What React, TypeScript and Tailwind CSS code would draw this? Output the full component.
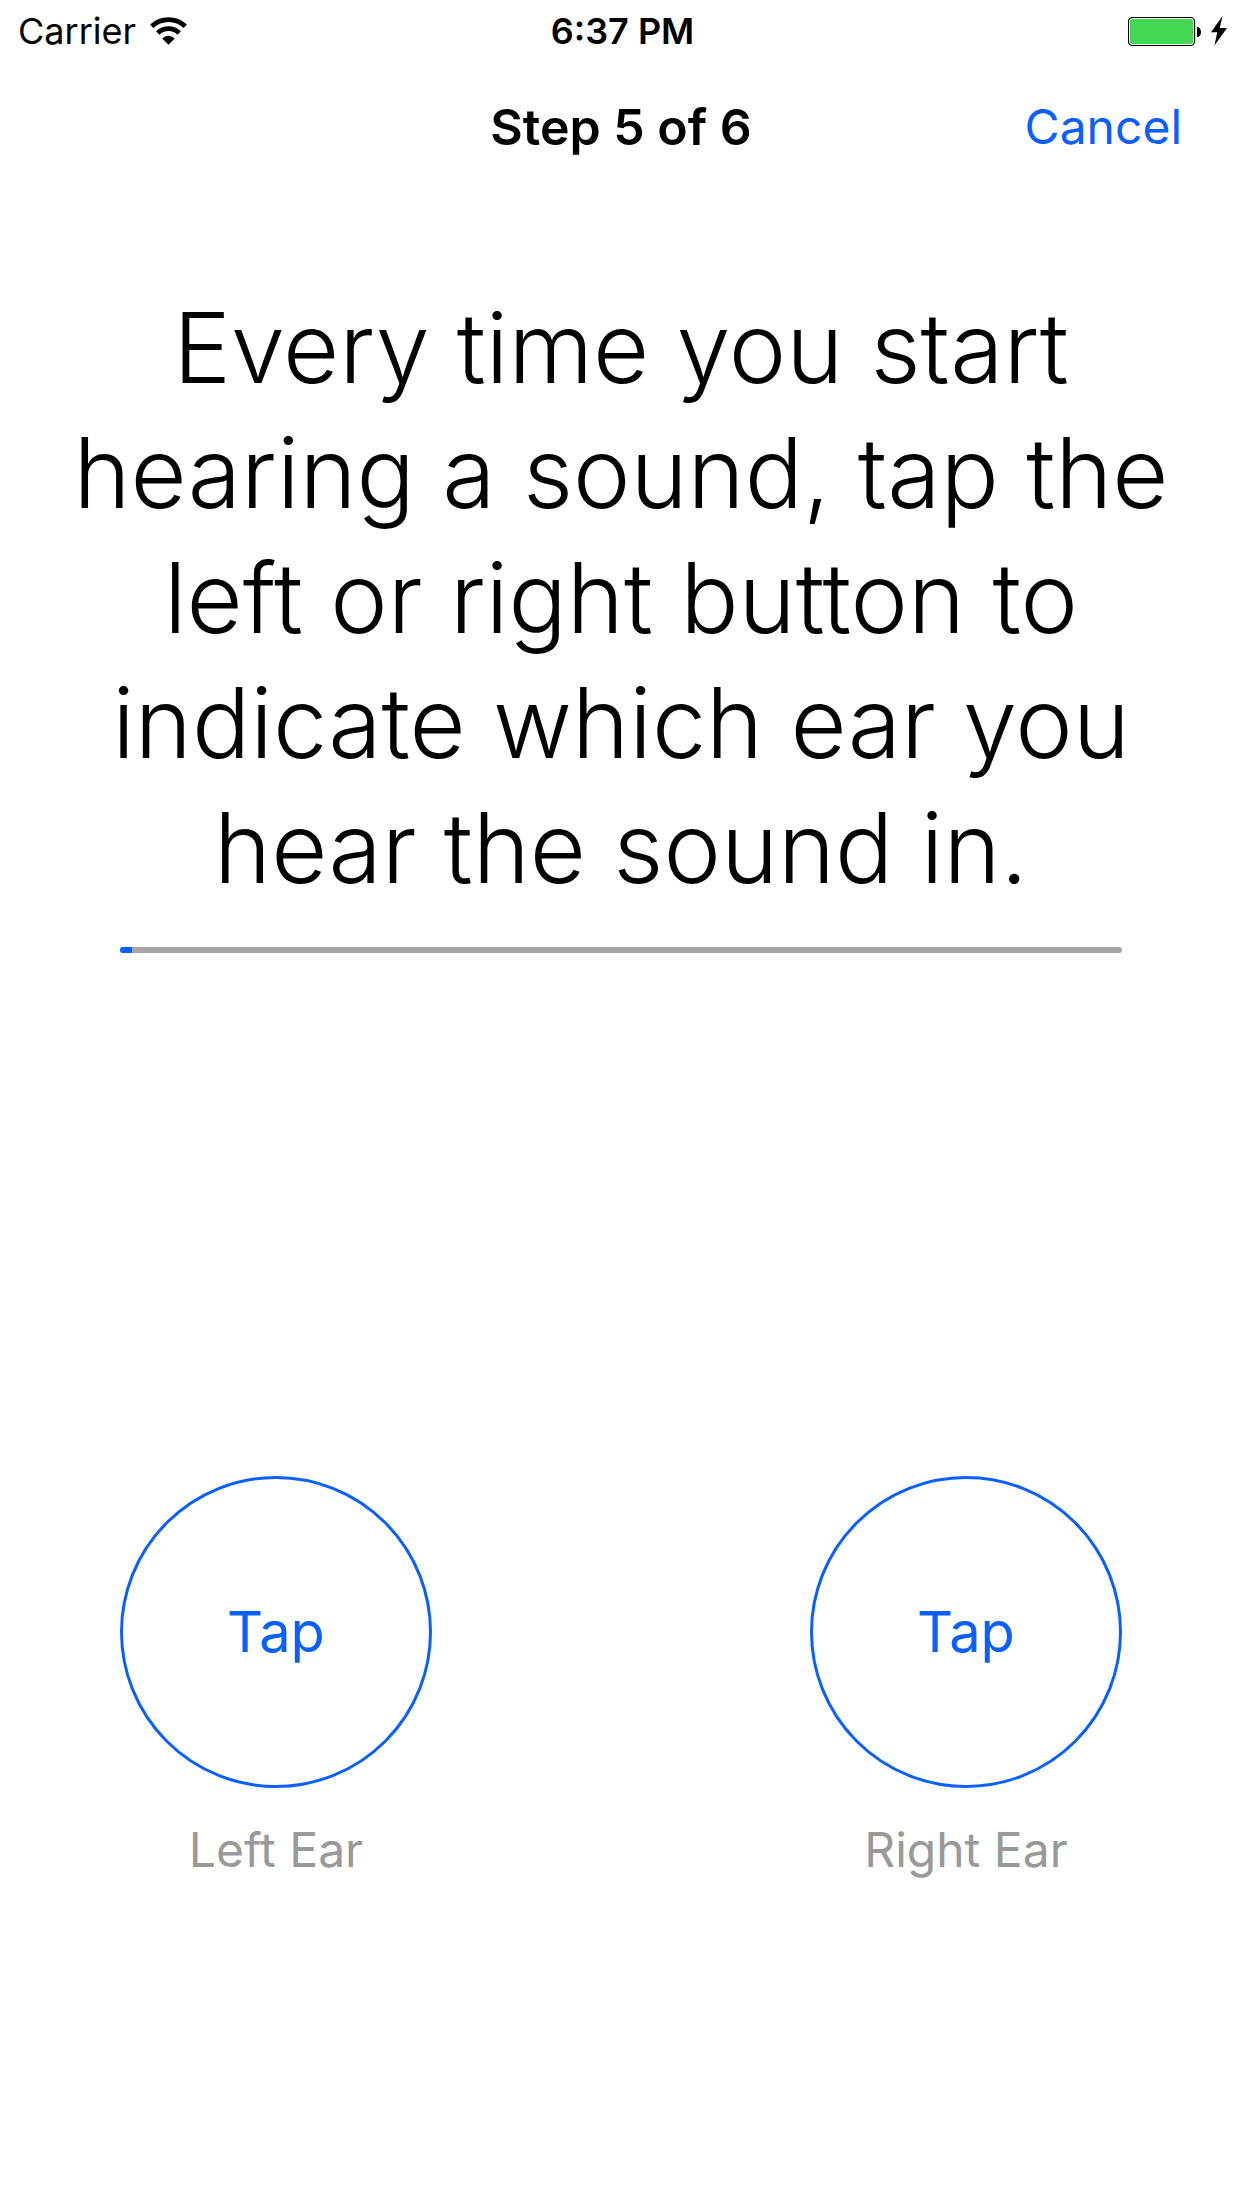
const PROGRESS = 1.2;

function WifiIcon() {
  return (
    <svg viewBox="0 0 37 28" className="h-7 w-[37px]" fill="none" aria-hidden="true">
      <path d="M1.7 9.3A24.5 24.5 0 0 1 35.3 9.3" stroke="currentColor" strokeWidth="4.8" />
      <path d="M7.8 15.9A15.4 15.4 0 0 1 29.2 15.9" stroke="currentColor" strokeWidth="4.8" />
      <path d="M12.2 21.4A9 9 0 0 1 24.8 21.4L18.5 27.8Z" fill="currentColor" />
    </svg>
  );
}

function BatteryIcon() {
  return (
    <svg viewBox="0 0 73 29" className="h-[29px] w-[73px]" role="img" aria-label="Battery full">
      <rect x="0.5" y="0.5" width="66" height="28" rx="4" fill="white" stroke="black" strokeWidth="1.2" />
      <rect x="2" y="2" width="63" height="25" rx="2.5" fill="#44d553" />
      <path d="M69 10C71.5 10 73 12 73 15S71.5 20 69 20Z" fill="black" />
    </svg>
  );
}

function BoltIcon() {
  return (
    <svg viewBox="0 0 16 30" className="h-[30px] w-4" fill="currentColor" aria-hidden="true">
      <path d="M11.5 0L0 16.2H6.3L3.4 29.5L16 12H8.8Z" />
    </svg>
  );
}

function Ear({ name }: { name: string }) {
  return (
    <div className="flex flex-col items-center">
      <button
        type="button"
        aria-label={`Tap, ${name}`}
        className="size-[312px] rounded-full border-3 border-[#0a60ff] text-[56px] text-[#0a60ff]"
      >
        Tap
      </button>
      <p className="mt-8 text-[48px] leading-[60px] text-[#999]">{name}</p>
    </div>
  );
}

export default function App() {
  return (
    <div className="min-h-screen bg-white font-['Inter','Liberation_Sans',sans-serif] text-black">
      <div className="grid h-[62px] grid-cols-[1fr_auto_1fr] items-center pr-[15px] pl-[18px] text-[36px]">
        <div className="flex items-center gap-[14px]">
          <span>Carrier</span>
          <WifiIcon />
        </div>
        <span className="font-semibold">6:37 PM</span>
        <div className="flex items-center justify-end gap-[10px]">
          <BatteryIcon />
          <BoltIcon />
        </div>
      </div>
      <header className="grid h-[130px] grid-cols-[1fr_auto_1fr] items-center px-[60px]">
        <h1 className="col-start-2 text-[50px] font-semibold">Step 5 of 6</h1>
        <button type="button" className="justify-self-end text-[48px] text-[#0a60ff]">
          Cancel
        </button>
      </header>
      <main className="px-[60px] pt-[93px]">
        <p className="text-center text-[97px] leading-[125px] font-light">
          Every time you start hearing a sound, tap the left or right button to indicate which ear you hear the sound in.
        </p>
        <div className="px-[60px]">
          <div
            role="progressbar"
            aria-label="Test progress"
            aria-valuenow={PROGRESS}
            aria-valuemin={0}
            aria-valuemax={100}
            className="mt-[37px] h-[6px] overflow-hidden rounded-full bg-[#a6a6a6]"
          >
            <div className="h-full bg-[#0a60ff]" style={{ width: `${PROGRESS}%` }} />
          </div>
          <section className="mt-[523px] flex justify-between">
            <Ear name="Left Ear" />
            <Ear name="Right Ear" />
          </section>
        </div>
      </main>
    </div>
  );
}
